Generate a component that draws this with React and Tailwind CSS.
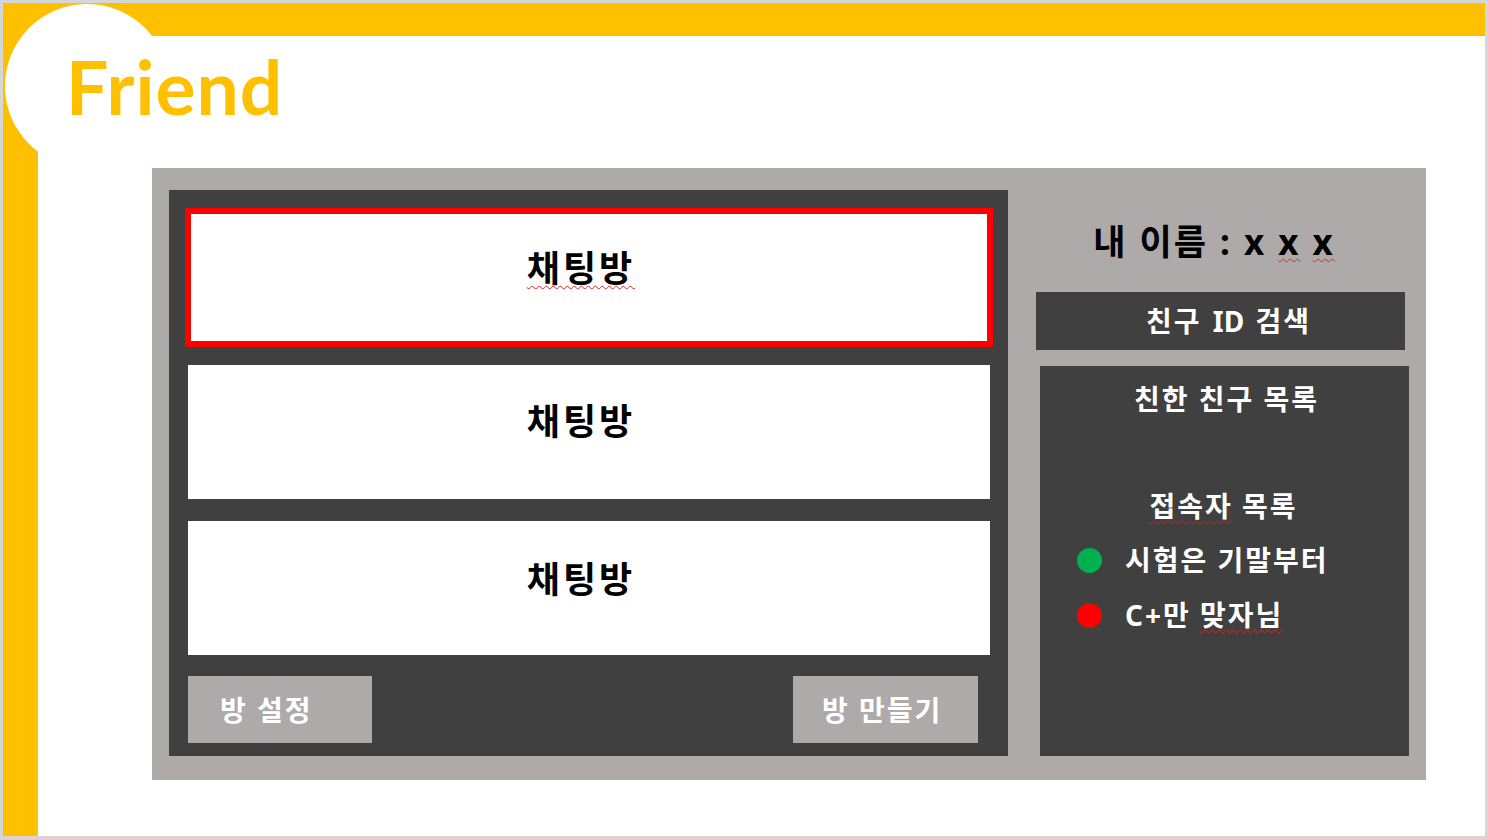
export default function App() {
  const wavy = "underline decoration-wavy decoration-[#e02020] decoration-1 underline-offset-[3px]";
  return (
    <div className="w-[1488px] h-[839px] bg-[#d6d6d6] p-[3px] font-['Noto_Sans','Noto_Sans_CJK_KR',sans-serif]">
      <div className="relative w-full h-full bg-white overflow-hidden flex flex-col">
        <div className="absolute left-[2px] top-[1px] w-[164px] h-[164px] rounded-full bg-white" />
        <div className="h-[33px] bg-[#FFC000] shrink-0" />
        <div className="flex flex-1">
          <div className="w-[35px] bg-[#FFC000] shrink-0" />
          <div className="flex-1 flex flex-col">
            <h1 className="relative z-10 mt-[13px] ml-[28px] h-[74px] text-[75px] leading-none font-bold tracking-[1px] text-[#FFC000] font-['Lato',sans-serif]">
              Friend
            </h1>
            <div className="mt-[45px] ml-[114px] w-[1274px] h-[612px] bg-[#AEAAAA] flex pl-[17px] pt-[22px]">
              {/* Left chat-room panel */}
              <div className="w-[839px] h-[566px] bg-[#404040] flex flex-col pt-[18px]">
                <div className="ml-[16px] w-[808px] h-[139px] border-[6px] border-[#FF0000] bg-white flex items-center justify-center pb-[18px] pr-[16px]">
                  <span className={"text-[36px] leading-none font-bold tracking-[3px] text-black " + wavy}>채팅방</span>
                </div>
                <div className="mt-[18px] ml-[19px] w-[802px] h-[134px] bg-white flex items-center justify-center pb-[20px] pr-[16px]">
                  <span className="text-[36px] leading-none font-bold tracking-[3px] text-black">채팅방</span>
                </div>
                <div className="mt-[22px] ml-[19px] w-[802px] h-[134px] bg-white flex items-center justify-center pb-[16px] pr-[16px]">
                  <span className="text-[36px] leading-none font-bold tracking-[3px] text-black">채팅방</span>
                </div>
                <div className="mt-[21px] flex justify-between pl-[19px] pr-[30px]">
                  <button className="w-[184px] h-[67px] bg-[#AEAAAA] text-white text-[28px] leading-none font-bold tracking-[2px] flex items-center pl-[32px]">
                    방 설정
                  </button>
                  <button className="w-[185px] h-[67px] bg-[#AEAAAA] text-white text-[28px] leading-none font-bold tracking-[2px] flex items-center pl-[29px]">
                    방 만들기
                  </button>
                </div>
              </div>
              {/* Right column */}
              <div className="flex-1 flex flex-col">
                <div className="h-[102px] flex items-center justify-center pr-[6px] text-[35px] leading-none font-bold tracking-[2px] [word-spacing:1px] text-black">
                  <span>
                    내 이름 : x <span className={wavy}>x</span> <span className={wavy}>x</span>
                  </span>
                </div>
                <div className="ml-[28px] w-[369px] h-[58px] bg-[#404040] text-white text-[28px] leading-none font-bold tracking-[2px] [word-spacing:2px] flex items-center justify-center pl-[16px]">
                  <span>
                    친구 <span className="tracking-normal">ID</span> 검색
                  </span>
                </div>
                <div className="mt-[16px] ml-[32px] w-[369px] h-[390px] bg-[#404040] text-white flex flex-col pt-[19px] text-[28px] leading-none font-bold tracking-[2px]">
                  <div className="h-[28px] text-center pl-[4px]">친한 친구 목록</div>
                  <div className="mt-[79px] h-[28px] text-center pr-[2px]">
                    <span className={wavy}>접속자</span> 목록
                  </div>
                  <div className="mt-[26px] h-[28px] flex items-center pl-[37px]">
                    <span className="w-[25px] h-[25px] rounded-full bg-[#00B050] shrink-0" />
                    <span className="ml-[23px]">시험은 기말부터</span>
                  </div>
                  <div className="mt-[27px] h-[28px] flex items-center pl-[37px]">
                    <span className="w-[25px] h-[25px] rounded-full bg-[#FF0000] shrink-0" />
                    <span className="ml-[23px]">
                      C+만 <span className={wavy}>맞자님</span>
                    </span>
                  </div>
                </div>
              </div>
            </div>
          </div>
        </div>
      </div>
    </div>
  );
}
